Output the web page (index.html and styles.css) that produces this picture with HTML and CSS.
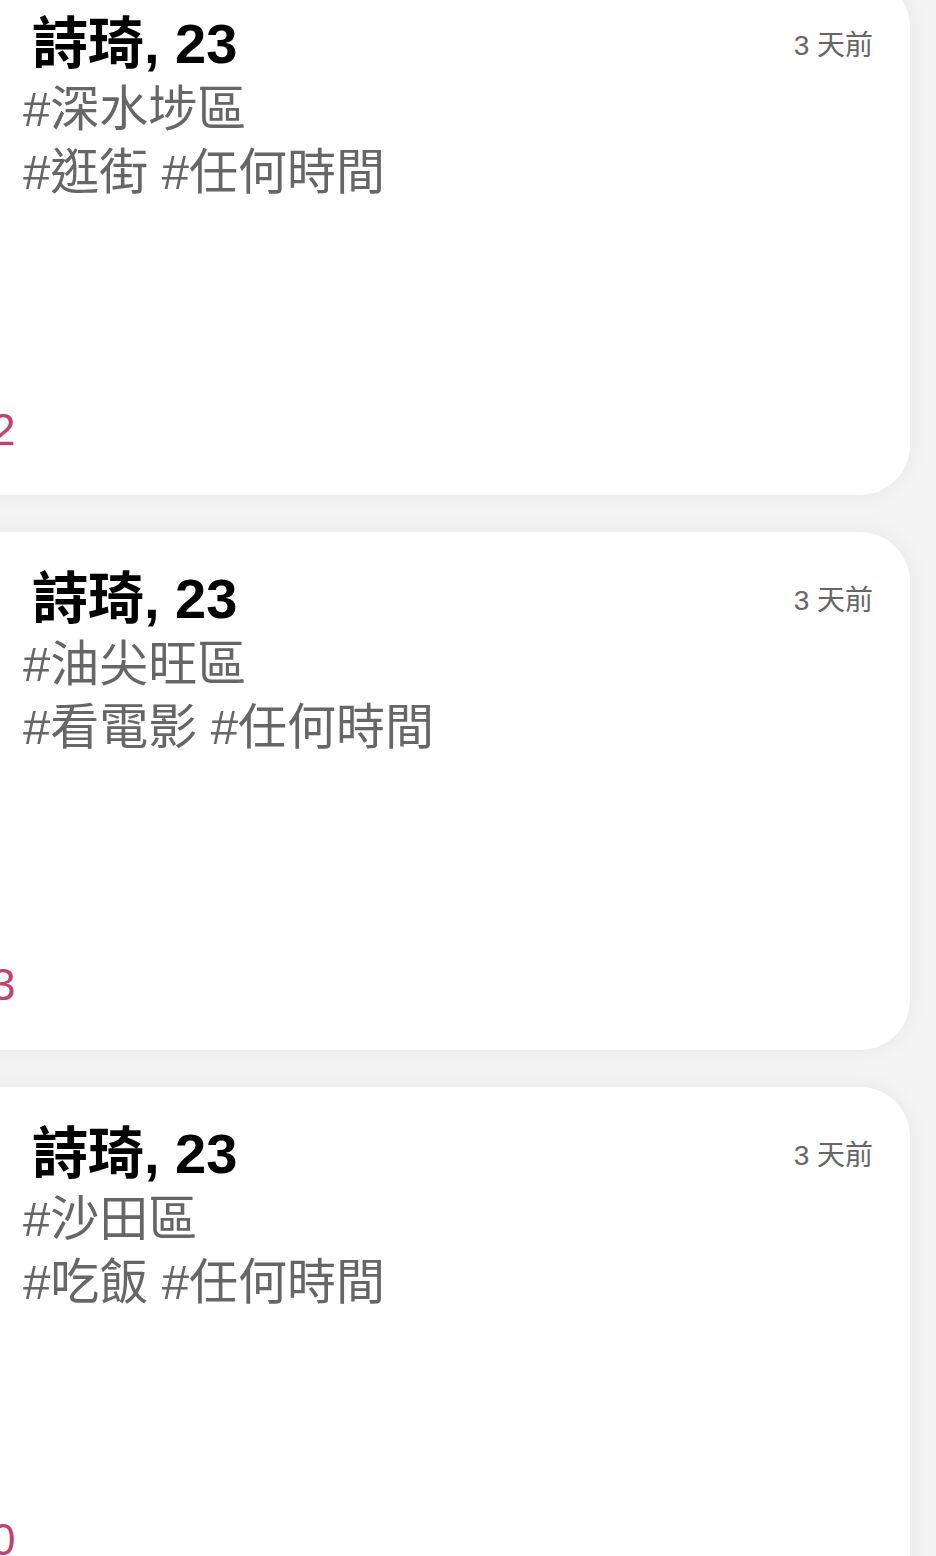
FILE: index.html
```html
<!DOCTYPE html>
<html lang="zh-Hant">
<head>
<meta charset="utf-8">
<title>Feed</title>
<link rel="stylesheet" href="styles.css">
</head>
<body>
<main class="feed">
  <article class="card">
    <div class="card-head">
      <h2 class="name">詩琦, 23</h2>
      <span class="time">3 天前</span>
    </div>
    <p class="tags">#深水埗區<br>#逛街 #任何時間</p>
    <div class="card-foot"><span class="count">2</span></div>
  </article>
  <article class="card">
    <div class="card-head">
      <h2 class="name">詩琦, 23</h2>
      <span class="time">3 天前</span>
    </div>
    <p class="tags">#油尖旺區<br>#看電影 #任何時間</p>
    <div class="card-foot"><span class="count">3</span></div>
  </article>
  <article class="card">
    <div class="card-head">
      <h2 class="name">詩琦, 23</h2>
      <span class="time">3 天前</span>
    </div>
    <p class="tags">#沙田區<br>#吃飯 #任何時間</p>
    <div class="card-foot"><span class="count">0</span></div>
  </article>
</main>
</body>
</html>
```
FILE: styles.css
```css
html, body {
  margin: 0;
  padding: 0;
}
body {
  background: #f4f4f4;
  width: 936px;
  height: 1556px;
  overflow: hidden;
  font-family: "Liberation Sans", "Noto Sans CJK TC", sans-serif;
}
.feed {
  display: flex;
  flex-direction: column;
  gap: 37px;
  margin-top: -23px;
  margin-left: -60px;
  margin-right: 26px;
}
.card {
  height: 518px;
  box-sizing: border-box;
  background: #ffffff;
  border-radius: 50px;
  box-shadow: 0 0 22px rgba(0, 0, 0, 0.06);
  padding: 35px 37px 29px 60px;
  display: flex;
  flex-direction: column;
}
.card-head {
  display: flex;
  justify-content: space-between;
  align-items: flex-start;
}
.name {
  margin: 0 0 0 32px;
  font-size: 56px;
  line-height: 63px;
  font-weight: 700;
  color: #000;
}
.time {
  margin-top: 17px;
  font-size: 28px;
  line-height: 34px;
  color: #666;
}
.tags {
  margin: 3px 0 0 23px;
  font-size: 49px;
  line-height: 63px;
  color: #666;
}
.card-foot {
  margin-top: auto;
  line-height: 52px;
}
.count {
  display: inline-block;
  margin-left: -9px;
  font-size: 44px;
  color: #c2426b;
}
```
